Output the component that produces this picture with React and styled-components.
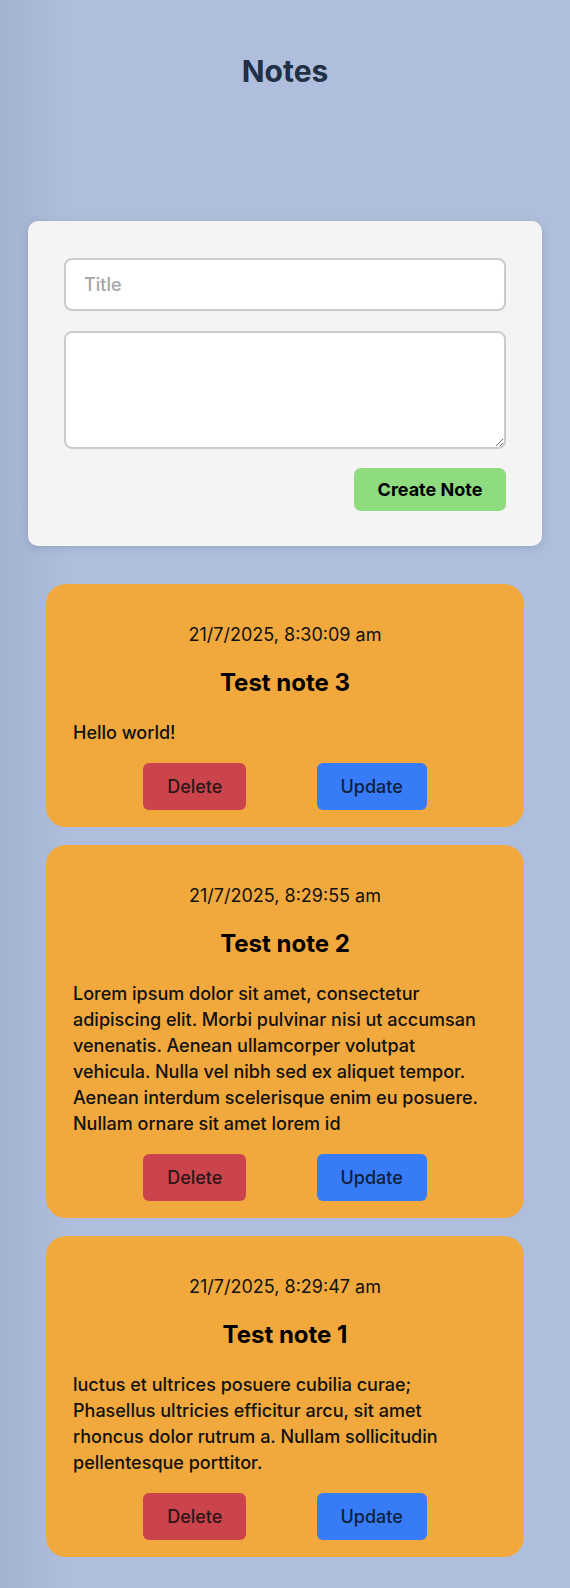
import React from 'react'
import styled, { createGlobalStyle } from 'styled-components'

const GlobalStyle = createGlobalStyle`
  html, body {
    margin: 0;
    padding: 0;
  }
  body {
    font-family: Inter, "Noto Sans", "Liberation Sans", sans-serif;
    background: linear-gradient(90deg, #a3b2cf 0px, #afbedc 70px, #afbedc 100%);
    min-height: 100vh;
  }
  * { box-sizing: border-box; }
`

const notes = [
  {
    id: 3,
    date: '21/7/2025, 8:30:09 am',
    title: 'Test note 3',
    body: 'Hello world!',
  },
  {
    id: 2,
    date: '21/7/2025, 8:29:55 am',
    title: 'Test note 2',
    body: 'Lorem ipsum dolor sit amet, consectetur adipiscing elit. Morbi pulvinar nisi ut accumsan venenatis. Aenean ullamcorper volutpat vehicula. Nulla vel nibh sed ex aliquet tempor. Aenean interdum scelerisque enim eu posuere. Nullam ornare sit amet lorem id',
  },
  {
    id: 1,
    date: '21/7/2025, 8:29:47 am',
    title: 'Test note 1',
    body: 'luctus et ultrices posuere cubilia curae; Phasellus ultricies efficitur arcu, sit amet rhoncus dolor rutrum a. Nullam sollicitudin pellentesque porttitor.',
  },
]

const App = () => {
  return (
    <Wrapper>
      <GlobalStyle />
      <Heading>Notes</Heading>
      <FormCard>
        <TitleInput type="text" placeholder="Title" />
        <BodyInput />
        <FormActions>
          <CreateButton>Create Note</CreateButton>
        </FormActions>
      </FormCard>
      <NoteList>
        {notes.map((note) => (
          <NoteCard key={note.id}>
            <NoteDate>{note.date}</NoteDate>
            <NoteTitle>{note.title}</NoteTitle>
            <NoteBody>{note.body}</NoteBody>
            <NoteActions>
              <ActionButton $variant="delete">Delete</ActionButton>
              <ActionButton $variant="update">Update</ActionButton>
            </NoteActions>
          </NoteCard>
        ))}
      </NoteList>
    </Wrapper>
  )
}

const Wrapper = styled.main`
  padding: 53px 0 30px;
`

const Heading = styled.h1`
  margin: 0;
  text-align: center;
  font-size: 30px;
  line-height: 36px;
  font-weight: 700;
  color: #1f3047;
`

const FormCard = styled.div`
  margin: 132px 28px 0;
  padding: 37px 36px 35px;
  background: #f4f4f4;
  border-radius: 10px;
  box-shadow: 0 2px 8px rgba(40, 60, 100, 0.18);
  display: flex;
  flex-direction: column;
`

const fieldStyles = `
  width: 100%;
  border: 2px solid #cbcbcb;
  border-radius: 8px;
  background: #fff;
  font-family: Inter, "Noto Sans", "Liberation Sans", sans-serif;
  font-size: 18px;
  color: #222;
  outline: none;
  &::placeholder {
    color: #a6a6a6;
    font-weight: 500;
  }
`

const TitleInput = styled.input`
  ${fieldStyles}
  height: 53px;
  padding: 0 18px;
`

const BodyInput = styled.textarea`
  ${fieldStyles}
  margin-top: 20px;
  height: 118px;
  padding: 12px 18px;
  resize: both;
`

const FormActions = styled.div`
  margin-top: 19px;
  display: flex;
  justify-content: flex-end;
`

const CreateButton = styled.button`
  width: 152px;
  height: 43px;
  border: none;
  border-radius: 7px;
  background: #8fdb80;
  color: #000;
  font-family: inherit;
  font-size: 18px;
  font-weight: 700;
  cursor: pointer;
`

const NoteList = styled.section`
  margin: 38px 46px 0;
  display: flex;
  flex-direction: column;
  gap: 18px;
`

const NoteCard = styled.article`
  background: #f1a83c;
  border-radius: 20px;
  padding: 41px 27px 17px;
  color: #111;
`

const NoteDate = styled.p`
  margin: 0;
  text-align: center;
  font-size: 18px;
  line-height: 20px;
  font-weight: 400;
`

const NoteTitle = styled.h2`
  margin: 24px 0 0;
  text-align: center;
  font-size: 24px;
  line-height: 28px;
  font-weight: 700;
  color: #000;
`

const NoteBody = styled.p`
  margin: 23px 0 0;
  font-size: 18px;
  line-height: 26px;
  font-weight: 500;
`

const NoteActions = styled.div`
  margin-top: 17px;
  display: flex;
  justify-content: space-evenly;
`

const ActionButton = styled.button`
  height: 47px;
  padding: 0 24px;
  border: none;
  border-radius: 6px;
  font-family: inherit;
  font-size: 18px;
  font-weight: 500;
  cursor: pointer;
  background: ${({ $variant }) => ($variant === 'delete' ? '#cc444b' : '#377bf6')};
  color: ${({ $variant }) => ($variant === 'delete' ? '#2b1517' : '#0f1f3d')};
`

export default App
